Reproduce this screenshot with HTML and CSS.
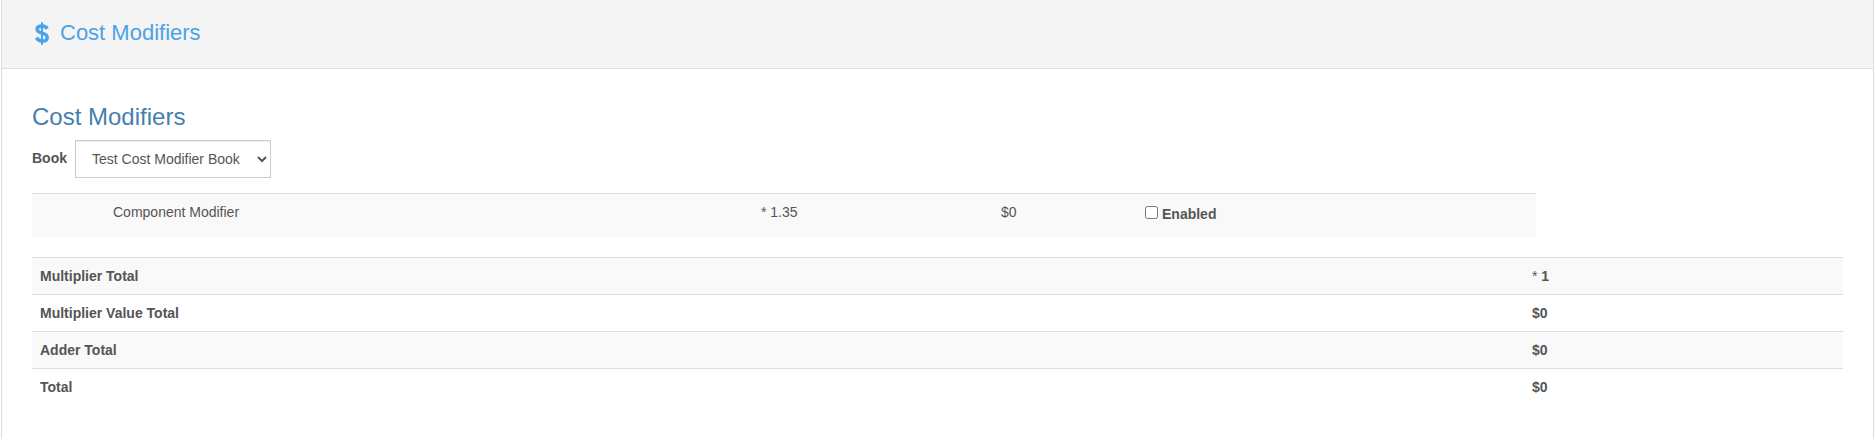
FILE: index.html
```
<!DOCTYPE html>
<html lang="en">
<head>
<meta charset="utf-8">
<title>Cost Modifiers</title>
<link rel="stylesheet" href="styles.css">
</head>
<body>
<section class="panel">
  <header class="panel-heading">
    <svg class="dollar" viewBox="0 0 14 23" aria-hidden="true">
      <path d="M12.2 6.8C11 4.6 9.2 4 7 4C4.2 4 2.1 5 2.1 7.3C2.1 9.8 4.2 10.4 7 11.1C10 11.9 12.2 12.7 12.2 15.4C12.2 18 10.1 19 7.2 19C4.6 19 2.7 18 1.4 15.7" stroke-width="3.5"/>
      <path d="M7 0.2V22.8" stroke-width="2"/>
    </svg>
    <span class="panel-title">Cost Modifiers</span>
  </header>
  <div class="panel-body">
    <h3 class="section-title">Cost Modifiers</h3>
    <div class="book-row">
      <label class="book-label" for="book">Book</label>
      <select class="book-select" id="book"><option>Test Cost Modifier Book</option></select>
    </div>
    <div class="modifier">
      <span>Component Modifier</span>
      <span>* 1.35</span>
      <span>$0</span>
      <label class="enabled"><input class="check" type="checkbox"><span class="enabled-text">Enabled</span></label>
    </div>
    <div class="totals">
      <div class="total-row"><span>Multiplier Total</span><span><span class="operator">*</span> 1</span></div>
      <div class="total-row"><span>Multiplier Value Total</span><span>$0</span></div>
      <div class="total-row"><span>Adder Total</span><span>$0</span></div>
      <div class="total-row"><span>Total</span><span>$0</span></div>
    </div>
  </div>
</section>
</body>
</html>
```
FILE: styles.css
```
* { box-sizing: border-box; }
body {
  margin: 0;
  background: #fff;
  color: #555;
  font: 14px/20px "Liberation Sans", Arial, sans-serif;
}
.panel {
  height: 439px;
  margin: 0 1px;
  border: solid #ddd;
  border-width: 0 1px;
}
.panel-heading {
  display: flex;
  height: 69px;
  padding: 22px 33px 0;
  background: #f4f4f4;
  border-bottom: 1px solid #ddd;
  color: #4ba3e7;
}
.dollar {
  width: 14px;
  height: 23px;
  margin-right: 11px;
  fill: none;
  stroke: currentColor;
}
.panel-title { font-size: 22px; line-height: 22px; }
.panel-body { padding: 35px 30px 0; }
.section-title {
  margin: 0;
  color: #457fad;
  font-size: 24px;
  font-weight: 400;
  line-height: 26px;
}
.book-row { display: flex; margin-top: 10px; }
.book-label { width: 43px; padding-top: 8px; font-weight: 700; }
.book-select {
  width: 196px;
  height: 38px;
  padding: 6px 0 6px 12px;
  border: 1px solid #ccc;
  border-radius: 0;
  background: #fff;
  box-shadow: inset 0 1px 1px rgba(0, 0, 0, .075);
  color: #555;
  font: inherit;
}
.modifier {
  display: grid;
  grid-template-columns: 648px 240px 144px 1fr;
  width: 1504px;
  height: 44px;
  margin-top: 15px;
  padding: 8px 0 0 81px;
  background: #f9f9f9;
  border-top: 1px solid #ddd;
}
.enabled { display: flex; font-weight: 700; }
.check { width: 13px; height: 13px; margin: 4px 4px 0 0; }
.enabled-text { padding-top: 2px; }
.totals { margin-top: 20px; }
.total-row {
  display: grid;
  grid-template-columns: 1492px 1fr;
  height: 37px;
  padding: 8px;
  border-top: 1px solid #ddd;
  font-weight: 700;
}
.total-row:nth-child(odd) { background: #f9f9f9; }
.operator { font-weight: 400; }
```
